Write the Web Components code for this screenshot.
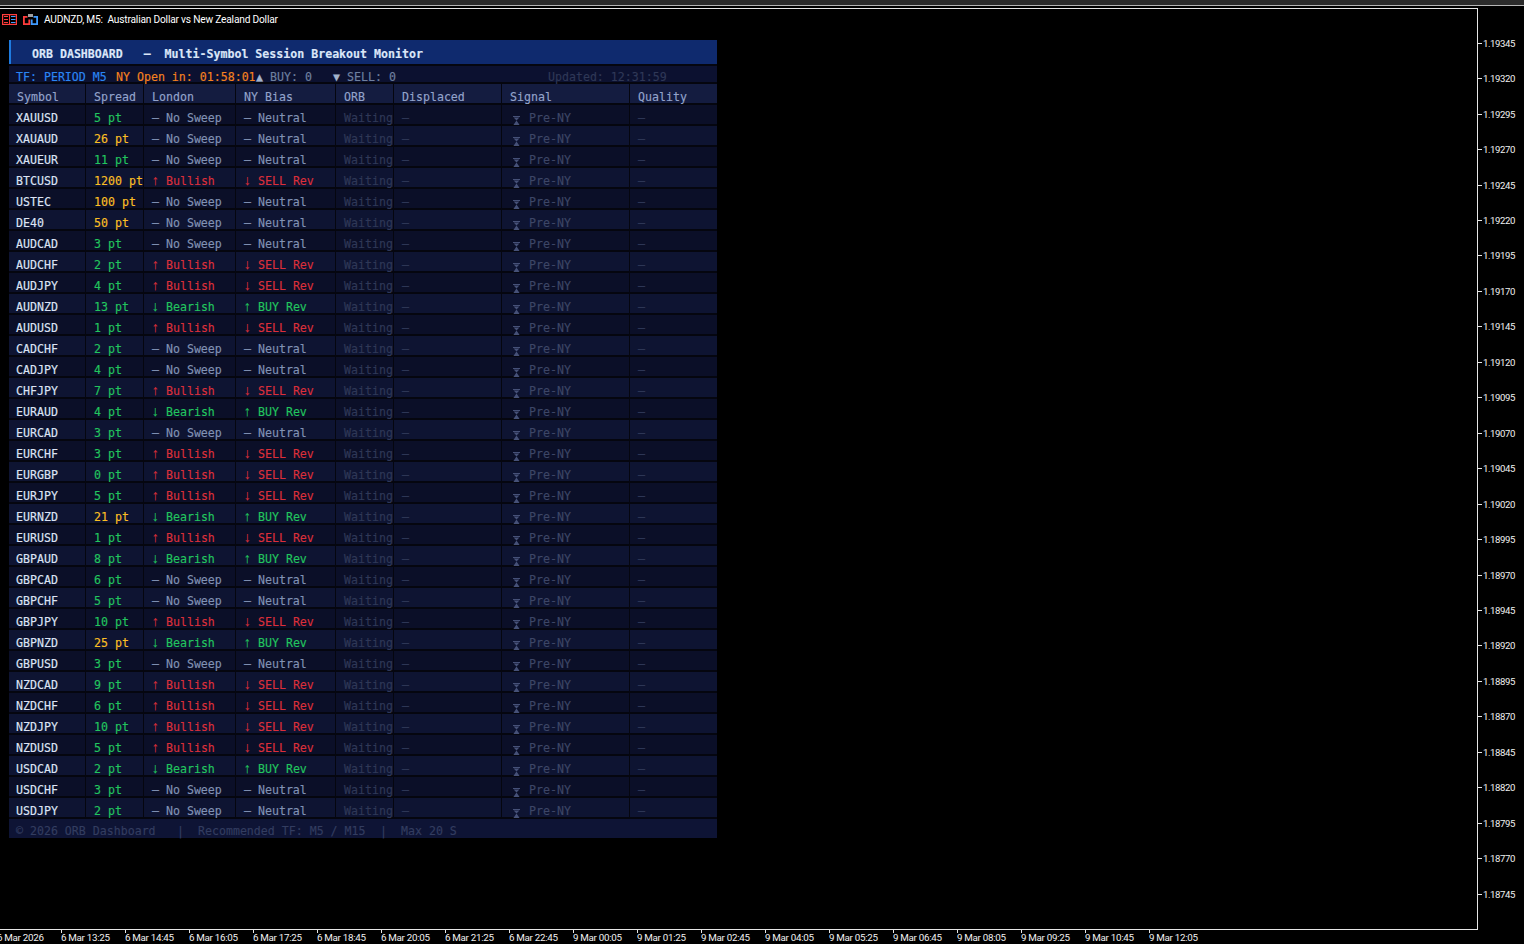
<!DOCTYPE html>
<html>
<head>
<meta charset="utf-8">
<title>ORB Dashboard</title>
<style>
  html, body { margin: 0; background: #000; width: 1524px; height: 944px; overflow: hidden; }
</style>
</head>
<body>
<mt-terminal>
  <chart-title slot="title" text="AUDNZD, M5:  Australian Dollar vs New Zealand Dollar"></chart-title>
  <orb-dashboard slot="panel"></orb-dashboard>
</mt-terminal>

<script>
const SYMBOLS = [
  ["XAUUSD", 5, "n"], ["XAUAUD", 26, "n"], ["XAUEUR", 11, "n"], ["BTCUSD", 1200, "u"],
  ["USTEC", 100, "n"], ["DE40", 50, "n"], ["AUDCAD", 3, "n"], ["AUDCHF", 2, "u"],
  ["AUDJPY", 4, "u"], ["AUDNZD", 13, "d"], ["AUDUSD", 1, "u"], ["CADCHF", 2, "n"],
  ["CADJPY", 4, "n"], ["CHFJPY", 7, "u"], ["EURAUD", 4, "d"], ["EURCAD", 3, "n"],
  ["EURCHF", 3, "u"], ["EURGBP", 0, "u"], ["EURJPY", 5, "u"], ["EURNZD", 21, "d"],
  ["EURUSD", 1, "u"], ["GBPAUD", 8, "d"], ["GBPCAD", 6, "n"], ["GBPCHF", 5, "n"],
  ["GBPJPY", 10, "u"], ["GBPNZD", 25, "d"], ["GBPUSD", 3, "n"], ["NZDCAD", 9, "u"],
  ["NZDCHF", 6, "u"], ["NZDJPY", 10, "u"], ["NZDUSD", 5, "u"], ["USDCAD", 2, "d"],
  ["USDCHF", 3, "n"], ["USDJPY", 2, "n"]
];

// sweep state -> london text, bias text, colour
const STATES = {
  n: { london: ["—", "No Sweep"], bias: ["—", "Neutral"], cls: "flat" },
  u: { london: ["↑", "Bullish"], bias: ["↓", "SELL Rev"], cls: "red" },
  d: { london: ["↓", "Bearish"], bias: ["↑", "BUY Rev"], cls: "green" }
};

const PRICES = [];
for (let i = 0; i < 25; i++) PRICES.push((1.19345 - i * 0.00025).toFixed(5));

const TIMES = ["6 Mar 2026", "6 Mar 13:25", "6 Mar 14:45", "6 Mar 16:05", "6 Mar 17:25", "6 Mar 18:45",
  "6 Mar 20:05", "6 Mar 21:25", "6 Mar 22:45", "9 Mar 00:05", "9 Mar 01:25", "9 Mar 02:45",
  "9 Mar 04:05", "9 Mar 05:25", "9 Mar 06:45", "9 Mar 08:05", "9 Mar 09:25", "9 Mar 10:45", "9 Mar 12:05"];

const UI_FONT = 'Roboto, "Liberation Sans", Arial, sans-serif';
const MONO_FONT = '"DejaVu Sans Mono", "Liberation Mono", monospace';

class MtTerminal extends HTMLElement {
  constructor() {
    super();
    this.attachShadow({ mode: "open" });
  }

  connectedCallback() {
    this.shadowRoot.innerHTML = `
      <style>
        :host { display: grid; grid-template-rows: 8px 922px 14px; width: 1524px; height: 944px; background: #000; }
        .chrome { background: linear-gradient(#2b2b2b 0 5px, #b5b5b5 5px 6px, #000 6px); }
        .main { display: grid; grid-template-columns: 1478px 46px; min-height: 0; }
        .chart { box-sizing: border-box; border: solid #e6e6e6; border-width: 1px 1px 1px 0; padding: 5px 0 0 0; min-height: 0; }
        .panel { display: block; margin: 15px 0 0 9px; }
      </style>
      <div class="chrome"></div>
      <div class="main">
        <div class="chart">
          <slot name="title"></slot>
          <div class="panel"><slot name="panel"></slot></div>
        </div>
        <price-axis></price-axis>
      </div>
      <time-axis></time-axis>
    `;
  }
}

class ChartTitle extends HTMLElement {
  constructor() {
    super();
    this.attachShadow({ mode: "open" });
  }

  connectedCallback() {
    const text = this.getAttribute("text") || "";
    this.shadowRoot.innerHTML = `
      <style>
        :host { display: flex; align-items: center; height: 11px; padding-left: 2px; color: #fff; font: 10.2px ${UI_FONT}; white-space: pre; }
        svg { display: block; flex: none; }
        .second { margin-left: 6px; }
        span { margin-left: 6px; letter-spacing: -0.2px; }
      </style>
      <svg width="15" height="11" viewBox="0 0 15 11" fill="none">
        <rect x=".6" y=".6" width="13.8" height="9.8" stroke="#ff3c3c" stroke-width="1.2"/>
        <path d="M2 2.5h4M2 5.5h4M2 8.5h4M7.5 1v9" stroke="#ff3c3c"/>
        <path d="M9 2.5h4.5M9 5.5h4.5M9 8.5h4.5" stroke="#3f9bff"/>
      </svg>
      <svg class="second" width="15" height="11" viewBox="0 0 15 11" fill="none">
        <path d="M4.5 2.8H.9v7.3h5.4V5.5" stroke="#ff3c3c" stroke-width="1.8"/>
        <path d="M10.5 2.8h3.6v7.3H8.7V5.5" stroke="#3f9bff" stroke-width="1.8"/>
        <rect x="5" y="0" width="5" height="3" fill="#a0a0a0"/>
      </svg>
      <span>${text}</span>
    `;
  }
}

class PriceAxis extends HTMLElement {
  constructor() {
    super();
    this.attachShadow({ mode: "open" });
  }

  connectedCallback() {
    const rows = PRICES.map(p => `<div class="row"><i></i><b>${p}</b></div>`).join("");
    this.shadowRoot.innerHTML = `
      <style>
        :host { display: grid; grid-auto-rows: 35.46px; align-content: start; padding-top: 17.5px; color: #f0f0f0; font: 9.6px ${UI_FONT}; letter-spacing: -0.4px; }
        .row { display: flex; align-items: center; }
        i { display: block; width: 4px; height: 1px; background: #e6e6e6; margin-right: 1px; }
        b { font-weight: normal; }
      </style>
      ${rows}
    `;
  }
}

class TimeAxis extends HTMLElement {
  constructor() {
    super();
    this.attachShadow({ mode: "open" });
  }

  connectedCallback() {
    const items = TIMES.map(t => `<div class="t"><span>${t}</span></div>`).join("");
    this.shadowRoot.innerHTML = `
      <style>
        :host { display: flex; margin-left: -3px; color: #f0f0f0; font: 9.8px ${UI_FONT}; letter-spacing: -0.3px; white-space: nowrap; }
        .t { flex: none; width: 64px; border-left: 1px solid #e6e6e6; box-sizing: border-box; height: 3px; }
        .t span { display: block; line-height: 16px; margin-left: -1px; }
        .t:first-child { border-left-color: transparent; }
      </style>
      ${items}
    `;
  }
}

class OrbDashboard extends HTMLElement {
  constructor() {
    super();
    this.attachShadow({ mode: "open" });
  }

  connectedCallback() {
    this.shadowRoot.innerHTML = `
      <style>
        :host {
          display: flex; flex-direction: column; width: 708px; background: #05060f;
          font: 11.6px ${MONO_FONT}; white-space: pre; -webkit-text-stroke: 0.15px;
          --cols: 76px 57px 91px 99px 57px 107px 127px 87px;
        }
        .banner { height: 24px; box-sizing: border-box; background: #0f2a6e; border-left: 2px solid #1e7be0; padding: 7px 0 0 21px; line-height: 14px; color: #dbe6f8; font-weight: bold; }
        .status { display: flex; height: 16px; margin-top: 2px; background: #0c1130; padding-left: 7px; line-height: 23px; color: #6f80a0; }
        .tf { color: #2b86f5; width: 100px; }
        .open { color: #f5821f; width: 140px; }
        .up { width: 14px; color: #a3b3cc; }
        .buy { width: 63px; }
        .down { width: 14px; color: #a3b3cc; }
        .sell { width: 201px; }
        .stamp { color: #2f3857; }
        .rows { display: flex; flex-direction: column; gap: 2px; margin-top: 2px; }
        .foot { display: flex; height: 19px; margin-top: 2px; background: #0e1435; padding-left: 7px; line-height: 24px; color: #333d60; }
        .foot .a { width: 161px; }
        .foot .b { width: 21px; }
        .foot .c { width: 182px; }
      </style>
      <div class="banner">ORB DASHBOARD   —  Multi-Symbol Session Breakout Monitor</div>
      <div class="status">
        <span class="tf">TF: PERIOD M5</span>
        <span class="open">NY Open in: 01:58:01</span>
        <span class="up">▲</span><span class="buy">BUY: 0</span>
        <span class="down">▼</span><span class="sell">SELL: 0</span>
        <span class="stamp">Updated: 12:31:59</span>
      </div>
      <div class="rows"><orb-head></orb-head></div>
      <div class="foot">
        <span class="a">© 2026 ORB Dashboard</span><span class="b">|</span><span class="c">Recommended TF: M5 / M15</span><span class="b">|</span><span>Max 20 S</span>
      </div>
    `;
    const rows = this.shadowRoot.querySelector(".rows");
    SYMBOLS.forEach((s, i) => {
      const row = document.createElement("orb-row");
      row.setAttribute("symbol", s[0]);
      row.setAttribute("spread", s[1]);
      row.setAttribute("state", s[2]);
      if (i % 2) row.setAttribute("alt", "");
      rows.appendChild(row);
    });
  }
}

class OrbHead extends HTMLElement {
  constructor() {
    super();
    this.attachShadow({ mode: "open" });
  }

  connectedCallback() {
    const names = ["Symbol", "Spread", "London", "NY Bias", "ORB", "Displaced", "Signal", "Quality"];
    this.shadowRoot.innerHTML = `
      <style>
        :host { display: grid; grid-template-columns: var(--cols); column-gap: 1px; height: 19px; color: #93a3cb; }
        div { background: #141c40; padding-left: 8px; line-height: 26px; height: 19px; }
        div:first-child { padding-left: 6px; }
      </style>
      ${names.map(n => `<div>${n}</div>`).join("")}
    `;
  }
}

class OrbRow extends HTMLElement {
  constructor() {
    super();
    this.attachShadow({ mode: "open" });
  }

  mark(pair) {
    // arrows come from Liberation Mono, they are too small in DejaVu at this size
    const cls = pair[0] === "—" ? "" : ' class="ar"';
    return `<span${cls}>${pair[0]}</span> ${pair[1]}`;
  }

  connectedCallback() {
    const spread = Number(this.getAttribute("spread"));
    const st = STATES[this.getAttribute("state")];
    const spreadColor = spread >= 20 ? "amber" : "green";
    this.shadowRoot.innerHTML = `
      <style>
        :host { display: grid; grid-template-columns: var(--cols); column-gap: 1px; height: 19px; --bg: #0b0f28; }
        :host([alt]) { --bg: #0e1432; }
        .c { background: var(--bg); padding-left: 8px; height: 19px; line-height: 26px; }
        .sym { padding-left: 7px; color: #dde3f4; }
        .green { color: #22c55e; }
        .amber { color: #fbbf24; }
        .red { color: #dc2f3a; }
        .flat { color: #8192b4; }
        .ar { display: inline-block; width: 7px; font: bold 14px "Liberation Mono", monospace; line-height: 0; text-indent: -1px; }
        .wait { color: #2f3857; }
        .dash { color: #2f3857; }
        .sig { display: flex; color: #3d4666; }
        .sig svg { flex: none; margin: 11px 9px 0 3px; }
      </style>
      <div class="c sym">${this.getAttribute("symbol")}</div>
      <div class="c ${spreadColor}">${spread} pt</div>
      <div class="c ${st.cls}">${this.mark(st.london)}</div>
      <div class="c ${st.cls}">${this.mark(st.bias)}</div>
      <div class="c wait">Waiting</div>
      <div class="c dash">—</div>
      <div class="c sig">
        <svg width="7" height="9" viewBox="0 0 7 9" fill="#465178"><path d="M0 0h7v1H0zM.6 1.4h5.8L3.5 4.5zM3.5 4.5 6.6 9H.4z"/></svg>
        <span>Pre-NY</span>
      </div>
      <div class="c dash">—</div>
    `;
  }
}

customElements.define("price-axis", PriceAxis);
customElements.define("time-axis", TimeAxis);
customElements.define("chart-title", ChartTitle);
customElements.define("orb-head", OrbHead);
customElements.define("orb-row", OrbRow);
customElements.define("orb-dashboard", OrbDashboard);
customElements.define("mt-terminal", MtTerminal);
</script>
</body>
</html>
